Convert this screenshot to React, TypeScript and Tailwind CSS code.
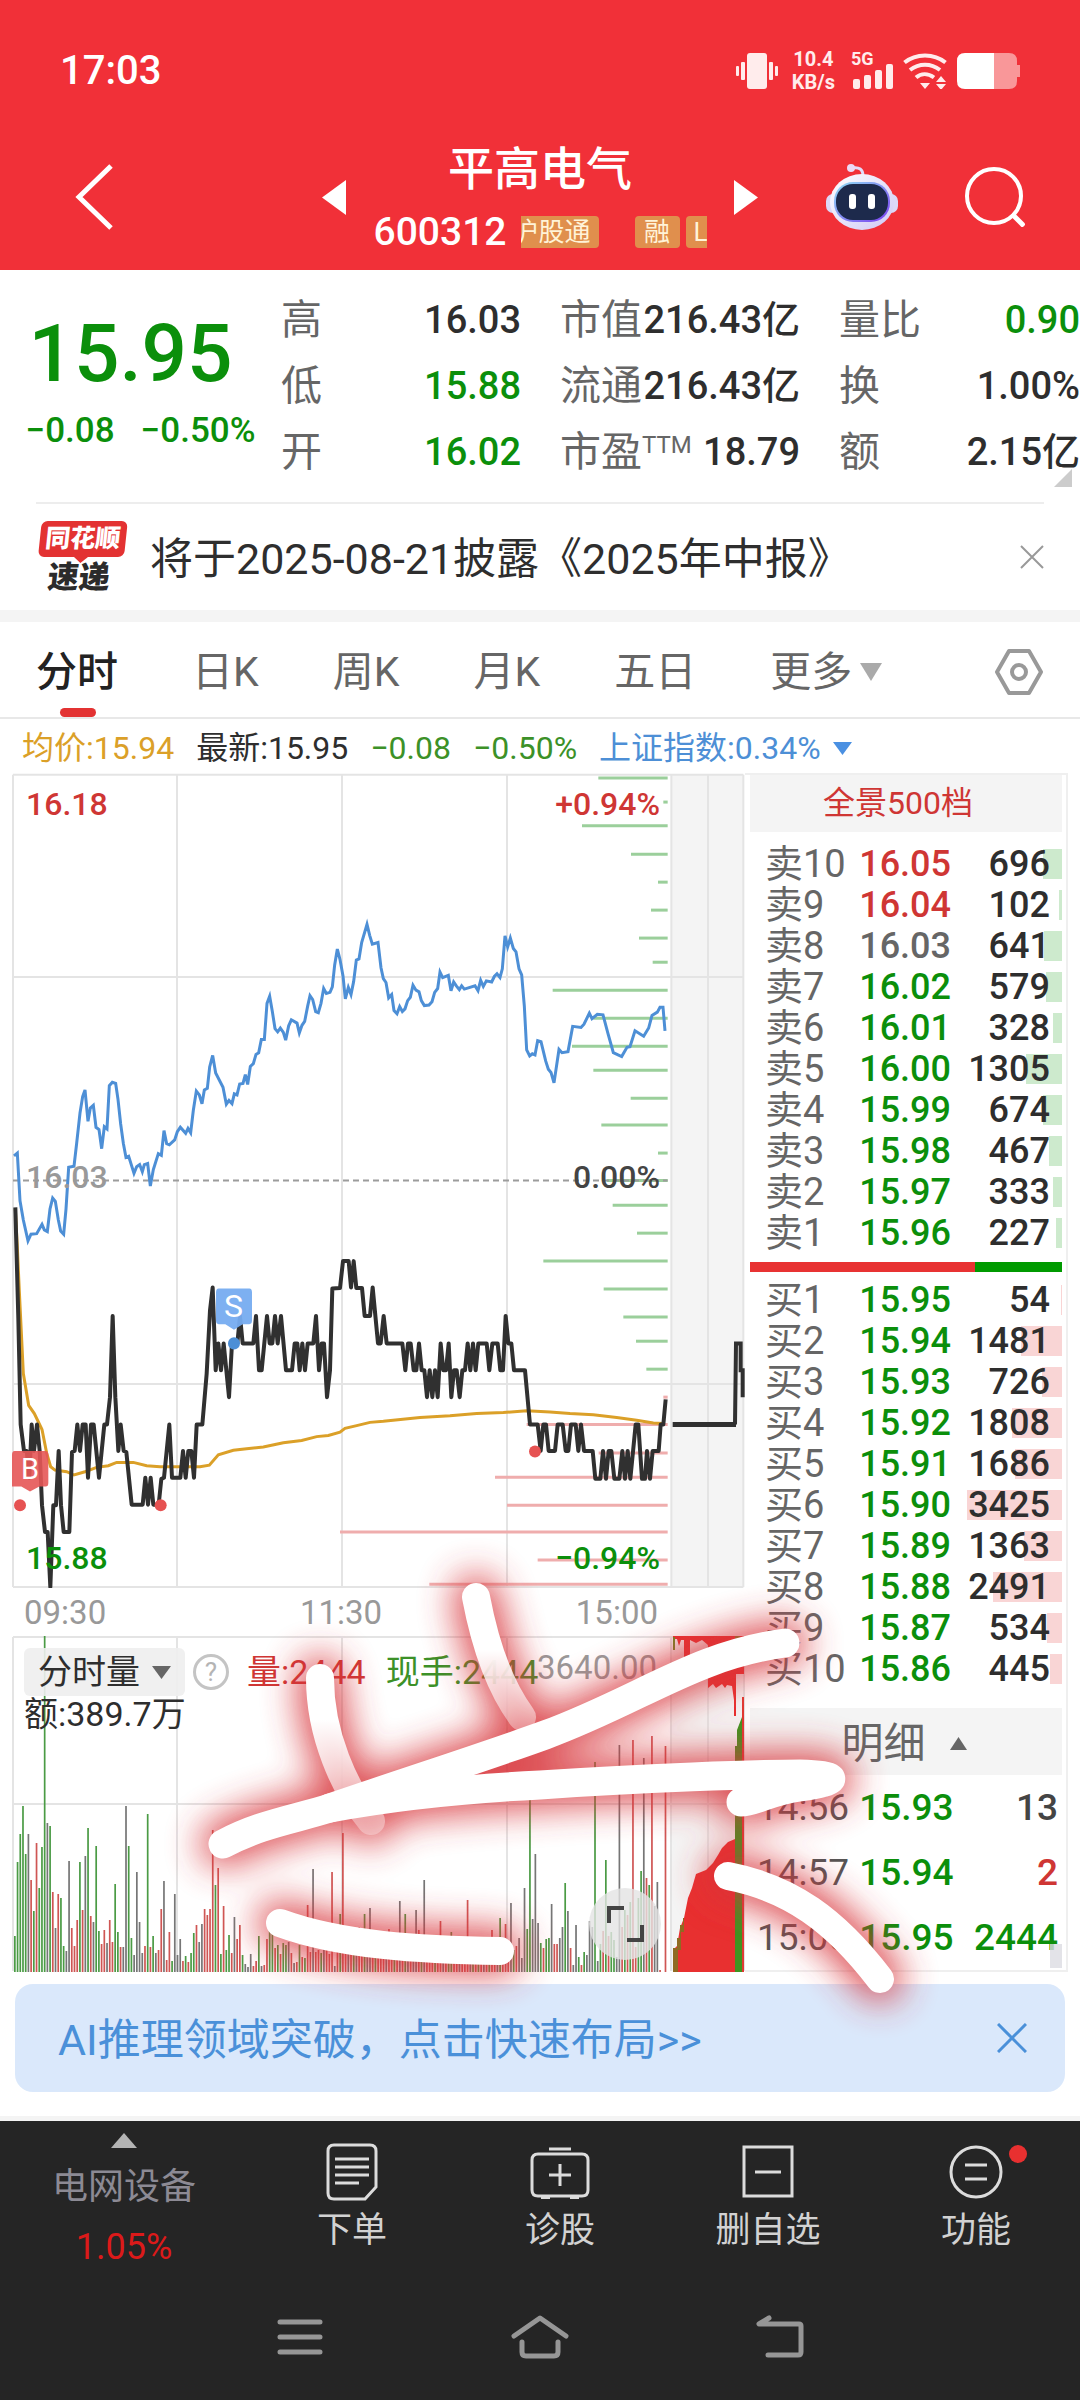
import React from "react";

const GREEN = "text-[#0b8f0b]";
const RED = "text-[#cf3634]";
const DARK = "text-[#2e2e2e]";

/* ---------- chart data ---------- */

const gridX = [39, 531, 1026, 1521, 2014, 2124, 2230];
const gridY = [8, 377, 1119, 1489];

const indexLine =
  "42,703 52,698 60,785 70,820 84,858 93,846 110,845 126,828 133,838 142,841 150,800 158,780 166,786 175,820 182,840 191,846 198,800 206,724 222,722 230,680 240,625 248,595 255,583 264,640 271,616 280,611 288,651 297,655 305,690 313,650 321,654 328,575 337,569 347,571 354,600 362,645 370,680 378,706 386,704 402,735 410,723 419,719 427,732 433,719 443,717 451,758 460,728 475,699 484,702 492,657 500,681 508,683 524,674 532,659 541,651 557,662 564,653 572,661 580,620 589,585 598,592 606,608 613,583 622,580 629,541 638,520 647,552 669,578 679,609 687,602 696,608 703,590 711,592 719,572 729,571 736,555 743,573 751,540 760,535 768,518 776,515 784,491 793,491 801,425 809,412 817,440 825,471 833,477 841,470 850,478 857,492 866,466 874,455 891,461 898,479 906,465 914,458 923,430 930,411 938,418 947,440 955,442 963,425 971,398 979,407 990,405 997,395 1004,355 1012,326 1020,345 1029,375 1036,417 1045,396 1053,409 1061,385 1069,346 1077,344 1085,314 1101,281 1109,301 1117,317 1134,314 1143,360 1150,380 1158,387 1166,415 1175,409 1182,438 1191,444 1199,431 1207,440 1215,435 1223,420 1231,414 1239,392 1248,401 1257,404 1264,420 1273,429 1287,428 1296,422 1304,405 1313,398 1320,368 1328,378 1345,374 1353,402 1361,386 1369,393 1378,400 1385,393 1393,399 1425,393 1434,402 1442,383 1450,394 1459,384 1475,386 1483,376 1491,371 1500,378 1507,362 1515,302 1523,322 1531,306 1540,325 1548,331 1557,362 1565,373 1573,430 1580,510 1589,521 1597,517 1605,519 1613,493 1623,495 1637,530 1645,545 1653,551 1662,570 1677,509 1686,515 1704,513 1718,467 1743,469 1752,463 1768,443 1776,453 1792,445 1809,446 1824,480 1840,515 1865,522 1881,505 1890,504 1905,475 1931,485 1946,470 1956,447 1972,441 1980,432 1989,432 1995,475";

const priceLine =
  "46,797 55,1000 62,1193 72,1241 80,1241 88,1290 95,1193 102,1241 111,1193 119,1241 126,1340 135,1389 143,1389 151,1489 160,1340 168,1340 176,1241 183,1340 191,1389 208,1389 216,1243 224,1241 232,1193 240,1241 248,1193 257,1193 264,1290 273,1193 281,1193 297,1290 313,1193 321,1193 330,1143 338,995 346,1143 355,1241 362,1193 371,1241 379,1243 395,1339 428,1339 436,1290 444,1339 452,1290 460,1339 476,1339 484,1292 492,1290 508,1193 516,1290 541,1290 549,1241 557,1290 565,1241 574,1241 582,1290 590,1193 607,1193 620,1100 630,985 638,943 647,1094 655,1045 663,1094 671,1045 687,1143 696,1045 712,1045 720,995 728,1045 760,1045 768,995 777,1094 785,1094 801,995 809,1045 817,1045 825,995 833,1045 843,995 858,1094 876,1094 884,1045 892,1045 899,1094 907,1045 915,1094 923,1045 940,1045 948,995 957,1094 965,1045 972,1045 981,1143 990,1094 997,945 1020,944 1029,895 1046,895 1053,943 1061,895 1069,944 1086,944 1094,995 1110,995 1118,943 1134,1045 1142,1045 1151,995 1160,1045 1207,1045 1216,1094 1224,1045 1232,1045 1241,1094 1249,1094 1257,1045 1265,1094 1273,1094 1281,1143 1289,1094 1297,1143 1305,1094 1313,1143 1322,1045 1330,1094 1338,1094 1346,1045 1354,1143 1362,1094 1370,1094 1379,1143 1387,1094 1395,1094 1403,1045 1411,1094 1419,1045 1427,1094 1435,1045 1460,1045 1468,1094 1477,1045 1493,1045 1501,1094 1509,1094 1517,995 1525,1045 1534,1045 1542,1094 1575,1094 1590,1193 1613,1193 1622,1241 1630,1193 1638,1193 1646,1241 1665,1241 1673,1193 1688,1193 1697,1241 1705,1241 1713,1193 1727,1193 1735,1241 1743,1193 1752,1241 1778,1241 1786,1292 1801,1292 1809,1241 1818,1292 1826,1241 1834,1241 1843,1292 1858,1292 1867,1241 1875,1292 1883,1241 1891,1292 1907,1193 1915,1193 1926,1292 1935,1292 1941,1241 1950,1292 1958,1241 1976,1241 1982,1193 1990,1193 1997,1147";

const averageLine =
  "46,800 52,870 58,950 70,1100 86,1158 103,1173 126,1202 140,1245 152,1270 165,1276 200,1279 222,1285 255,1279 290,1271 325,1268 350,1262 400,1262 440,1268 480,1270 600,1270 628,1267 655,1248 700,1240 740,1237 790,1234 850,1226 905,1222 950,1215 985,1213 1020,1207 1035,1200 1070,1195 1110,1189 1150,1187 1260,1180 1350,1177 1430,1173 1510,1171 1580,1168 1650,1170 1710,1173 1780,1175 1850,1180 1910,1185 1960,1190 1988,1191";

const sellLevels = [
  [1795, 14], [1990, 58], [1746, 101], [1893, 153], [1974, 204], [1953, 255], [1917, 306], [1958, 350],
  [1658, 401], [1780, 452], [1716, 503], [1780, 547], [1892, 598], [1804, 647], [1974, 698], [1820, 748],
  [1838, 793], [1911, 844], [1630, 895], [1811, 946], [1870, 997], [1908, 1041], [1939, 1092],
];
const buyLevels = [
  [1990, 1143], [1580, 1193], [1796, 1245], [1485, 1289], [1521, 1340], [1020, 1389], [1613, 1440], [1288, 1484],
];

/* one bar a minute: colour letter followed by the bar's height */
const volumes =
  "g36 g110 g138 g166 g118 k138 r92 g61 r129 g84 g125 g336 k149 g146 r80 k44 r78 g74 g26 k21 k111 r44 r26 r52 g110 r62 k116 g144 r56 k50 g126 g41 r28 r42 k29 r52 r30 g88 g40 r25 k25 k166 g126 g34 k17 k100 k50 k19 r26 g158 r25 g36 k19 r22 r63 k91 r12 r40 g11 k78 k17 k33 r11 g16 r10 g19 g39 r47 k30 k48 r63 r57 r63 r142 g87 r104 g18 r66 g22 g37 r19 k55 r33 r47 g17 k8 k5 k18 r6 r11 g36 k6 r7 r33 g42 g39 r24 g27 r18 g29 g27 k30 r19 k9 r10 g27 r15 g14 r67 r20 k103 r20 r22 g19 k26 r24 r18 r100 k6 r24 g58 r139 r29 k24 r31 g26 k22 r45 r30 g58 k24 k64 r28 g20 r26 r19 r33 k22 r43 r25 g26 r21 k71 r20 g58 k28 r30 k37 k62 r42 g23 k92 r20 r28 r18 g24 r22 r51 k20 r28 g22 g40 r26 r19 k28 r25 r22 r72 k20 g24 r30 g18 r26 k20 r28 g24 r42 r26 k34 g54 r30 r48 r26 k69 g22 r26 k34 k14 k84 g43 g179 k53 k118 k49 g29 r24 g33 g34 k68 r28 r28 k34 k45 g89 k61 r24 k7 k47 g15 r7 g20 k17 k51 k45 g210 k11 g28 r41 g112 r36 g40 g32 k15 k227 r45 g62 r57 g70 r232 r25 g74 g101 k214 r94 g87 r236 k66 k90 r2 r0 r226"
    .split(" ")
    .map((v) => ({ tone: v[0], size: Number(v.slice(1)) }));

const toneClass: Record<string, string> = {
  g: "fill-[#4b9b45]",
  r: "fill-[#cf5654]",
  k: "fill-[#767676]",
};

/* ---------- order book data ---------- */

type Level = { name: string; price: string; qty: number; tone: string };
const sells: Level[] = [
  { name: "卖10", price: "16.05", qty: 696, tone: RED },
  { name: "卖9", price: "16.04", qty: 102, tone: RED },
  { name: "卖8", price: "16.03", qty: 641, tone: "text-[#666]" },
  { name: "卖7", price: "16.02", qty: 579, tone: GREEN },
  { name: "卖6", price: "16.01", qty: 328, tone: GREEN },
  { name: "卖5", price: "16.00", qty: 1305, tone: GREEN },
  { name: "卖4", price: "15.99", qty: 674, tone: GREEN },
  { name: "卖3", price: "15.98", qty: 467, tone: GREEN },
  { name: "卖2", price: "15.97", qty: 333, tone: GREEN },
  { name: "卖1", price: "15.96", qty: 227, tone: GREEN },
];
const buys: Level[] = [
  { name: "买1", price: "15.95", qty: 54, tone: GREEN },
  { name: "买2", price: "15.94", qty: 1481, tone: GREEN },
  { name: "买3", price: "15.93", qty: 726, tone: GREEN },
  { name: "买4", price: "15.92", qty: 1808, tone: GREEN },
  { name: "买5", price: "15.91", qty: 1686, tone: GREEN },
  { name: "买6", price: "15.90", qty: 3425, tone: GREEN },
  { name: "买7", price: "15.89", qty: 1363, tone: GREEN },
  { name: "买8", price: "15.88", qty: 2491, tone: GREEN },
  { name: "买9", price: "15.87", qty: 534, tone: GREEN },
  { name: "买10", price: "15.86", qty: 445, tone: GREEN },
];
const trades = [
  { time: "14:56", price: "15.93", qty: "13", tone: "text-[#444]" },
  { time: "14:57", price: "15.94", qty: "2", tone: RED },
  { time: "15:00", price: "15.95", qty: "2444", tone: GREEN },
];

function BookTable({ rows, label, bar }: { rows: Level[]; label: string; bar: string }) {
  return (
    <table aria-label={label} className="w-full table-fixed border-collapse text-[36px] leading-[41px]">
      <tbody>
        {rows.map((r) => (
          <tr key={r.name} className="h-[41px]">
            <th scope="row" className="w-[35%] p-0 pl-[15px] text-left text-[38px] font-normal whitespace-nowrap text-[#666]">
              {r.name}
            </th>
            <td className={`w-[33%] p-0 font-medium ${r.tone}`}>{r.price}</td>
            <td className={`relative w-[32%] p-0 pr-3 text-right font-medium ${DARK}`}>
              <span
                className={`absolute top-[5px] right-0 h-[30px] ${bar}`}
                style={{ width: `${(r.qty / 3425) * 95}%` }}
              />
              <span className="relative">{r.qty}</span>
            </td>
          </tr>
        ))}
      </tbody>
    </table>
  );
}

/* ---------- header ---------- */

function StatusBar() {
  return (
    <div className="flex h-[134px] items-center px-[60px] pt-2">
      <span className="text-[40px] leading-[48px] font-medium">17:03</span>
      <svg className="ml-auto h-9 w-[42px] fill-[#ffecec]" viewBox="0 0 42 36" aria-label="振动">
        <rect x="11" y="0" width="20" height="36" rx="3" />
        <rect x="5" y="9" width="4" height="18" rx="1" />
        <rect x="0" y="13" width="3" height="10" rx="1" />
        <rect x="33" y="9" width="4" height="18" rx="1" />
        <rect x="39" y="13" width="3" height="10" rx="1" />
      </svg>
      <span className="ml-[14px] flex flex-col items-center text-[20px] leading-[23px] font-bold text-[#ffecec]">
        <span>10.4</span>
        <span>KB/s</span>
      </span>
      <span className="ml-4 flex h-10 flex-col">
        <span className="text-[18px] leading-[16px] font-bold text-[#ffecec]">5G</span>
        <svg className="-mt-1 ml-[2px] h-[26px] w-10 fill-[#ffecec]" viewBox="0 0 40 26">
          <rect x="0" y="16" width="7" height="10" rx="2" />
          <rect x="11" y="12" width="7" height="14" rx="2" />
          <rect x="22" y="7" width="7" height="19" rx="2" />
          <rect x="33" y="1" width="7" height="25" rx="2" />
        </svg>
      </span>
      <svg className="ml-[10px] h-9 w-11 fill-none stroke-[#ffecec]" viewBox="0 0 44 36" strokeWidth="4" aria-label="Wi-Fi">
        <path d="M1.500 9.500C13 0 31 0 42.500 9.500M7 17C16 10 28 10 37 17M13 24.500C18 20 25 20 31 24.500" />
        <path d="M17 30h10l-5 6zM33 29l5-6 5 6zM33 31h10l-5 6z" className="fill-[#ffecec]" stroke="none" />
      </svg>
      <svg className="ml-[10px] h-9 w-[63px]" viewBox="0 0 63 36" aria-label="电量">
        <path d="M37 0h15q8 0 8 8v4h3v12h-3v4q0 8-8 8H37z" className="fill-[#f99799]" />
        <path d="M37 0H8Q0 0 0 8v20q0 8 8 8h29z" className="fill-white" />
      </svg>
    </div>
  );
}

function Robot() {
  return (
    <svg className="h-[68px] w-[74px]" viewBox="0 0 74 68">
      <defs>
        <linearGradient id="shell" x1="0" y1="0" x2="1" y2="1">
          <stop offset="0" stopColor="#fff" />
          <stop offset="1" stopColor="#cfc8f5" />
        </linearGradient>
        <linearGradient id="rim" x1="0" y1="0" x2="1" y2="1">
          <stop offset="0" stopColor="#8fe0f5" />
          <stop offset="1" stopColor="#7a3cf0" />
        </linearGradient>
      </defs>
      <path d="M27 5q11-2 11 8" fill="none" stroke="#e2dcfa" strokeWidth="3" />
      <circle cx="26" cy="5" r="4" fill="#ecd9f6" />
      <rect x="1" y="31" width="72" height="19" rx="7" fill="#dcd8f8" />
      <ellipse cx="37" cy="39" rx="32" ry="28" fill="url(#shell)" />
      <rect x="9" y="19" width="56" height="40" rx="19" fill="url(#rim)" />
      <rect x="11" y="21" width="52" height="36" rx="17" fill="#1d2a4c" />
      <rect x="24" y="31" width="7" height="15" rx="3" fill="#fff" />
      <rect x="43" y="31" width="7" height="15" rx="3" fill="#fff" />
    </svg>
  );
}

function TitleBar() {
  return (
    <div className="grid grid-cols-[1fr_436px_1fr] items-center px-[55px] pb-[10px]">
      <button aria-label="返回" className="h-[66px] w-[66px] pl-5">
        <svg className="h-[66px] w-[38px] fill-none stroke-white stroke-[5]" viewBox="0 0 38 66">
          <path d="M36 2L4 33l32 31" />
        </svg>
      </button>
      <div className="flex items-center justify-between">
        <button aria-label="上一只">
          <svg className="h-[35px] w-6 fill-white" viewBox="0 0 24 35"><path d="M24 0v35L0 17.500z" /></svg>
        </button>
        <div className="flex flex-col items-center">
          <h1 className="text-[46px] leading-[70px] font-medium">平高电气</h1>
          <div className="flex items-center gap-[14px]">
            <span className="text-[39px] leading-[56px] font-medium">600312</span>
            <div className="flex h-8 w-[186px] overflow-hidden text-[26px] leading-8 whitespace-nowrap text-[#fff3d8]">
              <span className="flex w-[78px] shrink-0 justify-end overflow-hidden rounded-r-sm bg-[#e08f4d] pr-2">沪股通</span>
              <span className="ml-9 w-[45px] shrink-0 rounded-sm bg-[#e08f4d] text-center">融</span>
              <span className="ml-[6px] shrink-0 rounded-sm bg-[#e08f4d] px-2">L1</span>
            </div>
          </div>
        </div>
        <button aria-label="下一只">
          <svg className="h-[35px] w-6 fill-white" viewBox="0 0 24 35"><path d="M0 0v35L24 17.500z" /></svg>
        </button>
      </div>
      <div className="flex items-center justify-end gap-[66px]">
        <button aria-label="智能助手"><Robot /></button>
        <button aria-label="搜索">
          <svg className="h-[60px] w-[60px] fill-none stroke-white stroke-[4]" viewBox="0 0 60 60">
            <circle cx="29" cy="29" r="27" />
            <path d="M47 47l12 12" strokeWidth="5" />
          </svg>
        </button>
      </div>
    </div>
  );
}

/* ---------- quote summary ---------- */

function Quote({ name, sup, value, tone }: { name: string; sup?: string; value: string; tone: string }) {
  return (
    <div className="flex h-[66px] items-center justify-between leading-[48px] whitespace-nowrap">
      <dt className="flex text-[41px] text-[#666]">
        {name}
        {sup && <sup className="top-0 text-[24px] leading-[34px]">{sup}</sup>}
      </dt>
      <dd className={`text-[38px] font-medium ${tone}`}>{value}</dd>
    </div>
  );
}

function Summary() {
  return (
    <section className="relative grid h-[232px] grid-cols-[281fr_240fr_39fr_240fr_39fr_241fr]">
      <div className={`flex flex-col items-center pt-8 font-medium ${GREEN}`}>
        <strong className="mr-5 text-[80px] leading-[104px] font-medium">15.95</strong>
        <div className="flex gap-[26px] text-[35px] leading-[50px] whitespace-nowrap">
          <span>−0.08</span>
          <span>−0.50%</span>
        </div>
      </div>
      <dl className="pt-[17px]">
        <Quote name="高" value="16.03" tone={DARK} />
        <Quote name="低" value="15.88" tone={GREEN} />
        <Quote name="开" value="16.02" tone={GREEN} />
      </dl>
      <dl className="col-start-4 pt-[17px]">
        <Quote name="市值" value="216.43亿" tone={DARK} />
        <Quote name="流通" value="216.43亿" tone={DARK} />
        <Quote name="市盈" sup="TTM" value="18.79" tone={DARK} />
      </dl>
      <dl className="col-start-6 pt-[17px]">
        <Quote name="量比" value="0.90" tone={GREEN} />
        <Quote name="换" value="1.00%" tone={DARK} />
        <Quote name="额" value="2.15亿" tone={DARK} />
      </dl>
      <svg className="absolute right-2 bottom-[15px] h-[18px] w-[18px] fill-[#ccc]" viewBox="0 0 18 18"><path d="M18 0v18H0z" /></svg>
    </section>
  );
}

function News() {
  return (
    <section className="mx-9 flex h-[108px] items-center border-t-2 border-[#ededed]">
      <div className="flex w-[90px] -skew-x-6 flex-col items-center font-black">
        <span className="w-[86px] rounded-md bg-[#e33232] text-center text-[25px] leading-9 text-white">同花顺</span>
        <svg className="h-[6px] w-[14px] fill-[#e33232]" viewBox="0 0 14 6"><path d="M0 0h14L7 6z" /></svg>
        <span className="text-[31px] leading-[30px] text-[#2b2b2b]">速递</span>
      </div>
      <p className="ml-6 pt-1 text-[43px] leading-[52px] whitespace-nowrap text-[#2e2e2e]">将于2025-08-21披露《2025年中报》</p>
      <button aria-label="关闭" className="ml-auto">
        <svg className="h-6 w-6 stroke-[#999] stroke-2" viewBox="0 0 24 24"><path d="M1 1l22 22M23 1L1 23" /></svg>
      </button>
    </section>
  );
}

/* ---------- charts ---------- */

function Down({ className }: { className: string }) {
  return <svg className={className} viewBox="0 0 20 18" preserveAspectRatio="none"><path d="M0 0h20L10 18z" /></svg>;
}

function PriceChart() {
  return (
    <div className="relative">
      <svg
        className="block h-[815px] w-full fill-none [&_*]:[vector-effect:non-scaling-stroke]"
        viewBox="36 5 2199 1486"
        preserveAspectRatio="none"
        aria-label="分时走势"
      >
        <rect x="2014" y="8" width="216" height="1481" className="fill-[#f4f4f4]" />
        <g className="stroke-[#e4e4e4] stroke-2">
          {gridX.map((x) => <path key={x} d={`M${x} 8V1489`} />)}
          {gridY.map((y) => <path key={y} d={`M39 ${y}H2230`} />)}
        </g>
        <g className="stroke-[#9bcf9b] stroke-3">
          {sellLevels.map(([x, y]) => <path key={y} d={`M${x} ${y}H2003`} />)}
        </g>
        <g className="stroke-[#efadad] stroke-3">
          {buyLevels.map(([x, y]) => <path key={y} d={`M${x} ${y}H2003`} />)}
        </g>
        <path d="M39 748H2003" className="stroke-[#9c9c9c] stroke-2" strokeDasharray="6 4" />
        <polyline points={indexLine} className="stroke-[#4d8fd6] stroke-3" />
        <polyline points={averageLine} className="stroke-[#dba028] stroke-3" />
        <polyline points={priceLine} className="stroke-[#303030] stroke-4" strokeLinejoin="round" />
        <path d="M2018 1193H2208" className="stroke-[#303030] stroke-5" />
        <path d="M2205 1193L2208 1045H2222V1094H2228V1143" className="stroke-[#303030] stroke-4" />
        <g className="fill-[#e65252]">
          <ellipse cx="60" cy="1340" rx="18" ry="11" />
          <ellipse cx="482" cy="1340" rx="18" ry="11" />
          <ellipse cx="1605" cy="1242" rx="18" ry="11" />
        </g>
        <ellipse cx="702" cy="1045" rx="18" ry="11" className="fill-[#4d8fd6]" />
        <path d="M44 1241H137Q145 1241 145 1248V1299Q145 1306 137 1306H118L90 1315L64 1306H36V1248Q36 1241 44 1241" className="fill-[#e65656]/90" />
        <path d="M656 945H748Q756 945 756 952V1003Q756 1010 748 1010H728L702 1020L676 1010H656Q648 1010 648 1003V952Q648 945 656 945" className="fill-[#76acf0]/95" />
      </svg>
      <div className="absolute inset-0 text-[32px] leading-[40px] font-medium">
        <span className={`absolute top-[11px] left-[14px] ${RED}`}>16.18</span>
        <span className={`absolute top-[11px] right-[85px] ${RED}`}>+0.94%</span>
        <span className="absolute top-[384px] left-[14px] text-[#999]">16.03</span>
        <span className="absolute top-[384px] right-[85px] text-[#444]">0.00%</span>
        <span className={`absolute top-[765px] left-[14px] ${GREEN}`}>15.88</span>
        <span className={`absolute top-[765px] right-[85px] ${GREEN}`}>−0.94%</span>
        <span className="absolute top-[678px] left-[9px] text-[29px] leading-9 font-normal text-white">B</span>
        <span className="absolute top-[515px] left-[212px] text-[32px] leading-9 font-normal text-white">S</span>
      </div>
    </div>
  );
}

function VolumeChart() {
  return (
    <div className="relative">
      <svg className="block h-[336px] w-full" viewBox="12 1636 733 336" preserveAspectRatio="none" aria-label="分时量">
        <rect x="671" y="1637" width="73" height="334" className="fill-[#f4f4f4]" />
        <g className="fill-none stroke-[#e4e4e4] stroke-2">
          {[13, 177, 342, 507, 671, 708, 744].map((x) => <path key={x} d={`M${x} 1637V1971`} />)}
          {[1637, 1804].map((y) => <path key={y} d={`M13 ${y}H744`} />)}
        </g>
        {volumes.map((v, i) => (
          <rect key={i} x={14 + i * 2.711} y={1972 - v.size} width="1.7" height={v.size} className={toneClass[v.tone]} />
        ))}
        <path
          d="M673 1972V1950L677 1946L680 1928L684 1918L688 1898L692 1888L696 1874L706 1870L713 1863L718 1855L722 1848L728 1842L735 1839V1972z"
          className="fill-[#e83030]"
        />
        <path d="M673 1972V1948H677V1938H680V1925H683V1918H684V1932H681V1950H678V1972z" className="fill-[#8f6a22]" />
        <path d="M735 1972V1746H737V1730L742 1717V1972z" className="fill-[#3f9420]" />
        <path d="M742 1972V1697H744V1972z" className="fill-[#e03a34]" />
        <path
          d="M673 1636H744V1674H736V1716H734V1700L732 1686L727 1685L725 1688L722 1684L716 1688L713 1684L708 1688V1645L702 1640L696 1643L690 1640V1658H684V1640H681L679 1646L677 1639H673z"
          className="fill-[#e83030]"
        />
        <path d="M673 1637h2v13h-2zM735 1636h5v5h-5z" className="fill-[#6a8a22]" />
      </svg>
      <div className="absolute inset-x-0 top-3 pl-3">
        <div className="flex items-center text-[34px] leading-12 whitespace-nowrap">
          <button className={`flex h-12 items-center gap-3 rounded-md bg-[#eee]/90 px-[14px] ${DARK}`}>
            分时量
            <Down className="h-[13px] w-[19px] fill-[#666]" />
          </button>
          <button aria-label="说明" className="ml-2 h-9 w-9 rounded-full border-[3px] border-[#c4c4c4] text-[26px] leading-[30px] text-[#b4b4b4]">
            ?
          </button>
          <span className={`ml-[18px] ${RED}`}>量:2444</span>
          <span className="ml-5 text-[#3c9128]">现手:2444</span>
        </div>
        <p className={`text-[34px] leading-[36px] ${DARK}`}>额:389.7万</p>
      </div>
      <span className="absolute top-[10px] right-[88px] text-[33px] leading-[44px] text-[#999]">3640.00</span>
      <button aria-label="全屏" className="absolute right-[84px] bottom-3 h-[72px] w-[72px] rounded-full bg-[#e4e4e4]/80">
        <svg className="h-[72px] w-[72px] fill-none stroke-[#444] stroke-[4]" viewBox="0 0 72 72">
          <path d="M20 35V20h15M38 52h15V37" />
        </svg>
      </button>
    </div>
  );
}

/* free-hand brush strokes with a red glow over the charts */
const brush = [
  { d: "M320 1678C320 1735 345 1790 371 1821", w: 28, c: "url(#fadeA)" },
  { d: "M476 1597C486 1650 502 1690 522 1717", w: 28, c: "url(#fadeB)" },
  { d: "M223 1844C260 1824 295 1819 330 1808C415 1779 490 1755 545 1735C640 1700 695 1655 785 1643", w: 29, c: "#fff" },
  { d: "M330 1808C400 1795 480 1788 540 1785C640 1778 760 1774 800 1774C840 1775 842 1781 800 1787C770 1791 755 1802 741 1802", w: 29, c: "#fff" },
  { d: "M280 1923C340 1945 420 1950 500 1951", w: 28, c: "#fff" },
  { d: "M728 1876C790 1888 835 1920 880 1979", w: 28, c: "#fff" },
];

function Scribble() {
  return (
    <svg
      className="pointer-events-none absolute inset-0 h-full w-full overflow-visible fill-none"
      viewBox="0 773 1080 1199"
      preserveAspectRatio="none"
      aria-hidden="true"
    >
      <defs>
        <filter id="glow" filterUnits="userSpaceOnUse" x="100" y="1450" width="900" height="650">
          <feGaussianBlur stdDeviation="18" />
        </filter>
        <linearGradient id="fadeA" gradientUnits="userSpaceOnUse" x1="0" y1="1720" x2="0" y2="1835">
          <stop offset="0" stopColor="#fff" />
          <stop offset="1" stopColor="#fff" stopOpacity="0.3" />
        </linearGradient>
        <linearGradient id="fadeB" gradientUnits="userSpaceOnUse" x1="0" y1="1650" x2="0" y2="1735">
          <stop offset="0" stopColor="#fff" />
          <stop offset="1" stopColor="#fff" stopOpacity="0.3" />
        </linearGradient>
      </defs>
      <g filter="url(#glow)" strokeLinecap="round" strokeLinejoin="round" className="stroke-[#d8343a]" opacity="0.88">
        {brush.map((b) => <path key={b.d} d={b.d} strokeWidth="45" />)}
      </g>
      <g strokeLinecap="round" strokeLinejoin="round">
        {brush.map((b) => <path key={b.d} d={b.d} stroke={b.c} strokeWidth={b.w} />)}
      </g>
    </svg>
  );
}

/* ---------- bottom bar ---------- */

function Action({ label, children }: { label: string; children: React.ReactNode }) {
  return (
    <button className="relative flex flex-1 flex-col items-center pt-[23px] text-[35px] leading-[50px] text-[#d2d2d2]">
      <svg className="mb-[6px] h-14 w-[58px] overflow-visible fill-none stroke-[#dcdcdc] stroke-3" viewBox="0 0 58 56">
        {children}
      </svg>
      {label}
    </button>
  );
}

export default function App() {
  return (
    <main className='min-h-screen overflow-hidden bg-white font-[Roboto,"Noto_Sans_CJK_SC",sans-serif]'>
      <header className="bg-[#f13038] text-white">
        <StatusBar />
        <TitleBar />
      </header>
      <Summary />
      <News />
      <div className="h-3 bg-[#f4f4f4]" />

      <nav className="flex h-[97px] items-center gap-[74px] border-b-2 border-[#e8e8e8] pt-1 pr-[37px] pl-9 text-[41px] leading-[60px] whitespace-nowrap text-[#666]">
        <button className="relative flex h-full items-center font-medium text-[#222]">
          分时
          <span className="absolute bottom-0 left-6 h-[9px] w-9 rounded-full bg-[#e33232]" />
        </button>
        <button>日K</button>
        <button>周K</button>
        <button>月K</button>
        <button>五日</button>
        <button className="flex items-center gap-2">
          更多
          <Down className="h-[18px] w-[22px] fill-[#aaa]" />
        </button>
        <button aria-label="设置" className="ml-auto">
          <svg className="h-[46px] w-[48px] fill-none stroke-[#999] stroke-[4]" viewBox="0 0 48 46" strokeLinejoin="round">
            <path d="M14 2h20l12 21-12 21H14L2 23z" />
            <circle cx="24" cy="23" r="7" />
          </svg>
        </button>
      </nav>

      <div className="flex h-[54px] items-center gap-[22px] pt-1 pl-[22px] text-[32px] leading-[44px] whitespace-nowrap">
        <span className="text-[#dba028]">均价:15.94</span>
        <span className={DARK}>最新:15.95</span>
        <span className="text-[#3c9128]">−0.08</span>
        <span className="text-[#3c9128]">−0.50%</span>
        <button className="flex items-center gap-3 text-[#4d8fd6]">
          上证指数:0.34%
          <Down className="h-[13px] w-[19px] fill-[#4a90e2]" />
        </button>
      </div>

      <section className="relative grid grid-cols-[733fr_323fr] px-3">
        <div>
          <PriceChart />
          <div className="grid h-12 grid-cols-3 items-center pt-[2px] pr-[87px] pl-3 text-[33px] leading-[46px] text-[#999]">
            <span>09:30</span>
            <span className="text-center">11:30</span>
            <span className="text-right">15:00</span>
          </div>
          <VolumeChart />
        </div>

        <aside className="border-2 border-l-0 border-[#efefef] pr-1 pl-[5px]">
          <button className={`block h-[57px] w-full bg-[#f4f4f4] pr-4 text-[32px] leading-[57px] ${RED}`}>全景500档</button>
          <div className="pt-3">
            <BookTable rows={sells} label="卖盘" bar="bg-[#cdeacd]" />
          </div>
          <div className="my-2 flex h-[10px] bg-[#009a00]">
            <div className="w-[72%] bg-[#e83232]" />
          </div>
          <BookTable rows={buys} label="买盘" bar="bg-[#f9d5d5]" />
          <button className="mt-[18px] flex h-[67px] w-full items-center justify-center gap-6 bg-[#f4f4f4] pt-1 pr-1 text-[42px] leading-[60px] text-[#666]">
            明细
            <svg className="h-[13px] w-[17px] fill-[#666]" viewBox="0 0 17 13"><path d="M8.500 0L17 13H0z" /></svg>
          </button>
          <div className="relative">
            <table aria-label="成交明细" className="w-full table-fixed border-collapse text-[37px] leading-[60px]">
              <tbody>
                {trades.map((t) => (
                  <tr key={t.time} className="h-[65px]">
                    <td className="w-[35%] p-0 pl-[7px] text-[#555]">{t.time}</td>
                    <td className={`w-[32%] p-0 font-medium ${GREEN}`}>{t.price}</td>
                    <td className={`w-[33%] p-0 pr-1 text-right font-medium ${t.tone}`}>{t.qty}</td>
                  </tr>
                ))}
              </tbody>
            </table>
            <span className="absolute right-0 bottom-[2px] h-6 w-3 bg-[#dcdce2]/80" />
          </div>
        </aside>
        <Scribble />
      </section>

      <div className="mx-[15px] mt-3 flex h-[108px] items-center justify-between rounded-[18px] bg-[#dae8fb] pr-[38px] pl-[43px] text-[#4a90d9]">
        <a href="#ai" className="pt-1 text-[43px] leading-[60px] whitespace-nowrap">AI推理领域突破，点击快速布局&gt;&gt;</a>
        <button aria-label="关闭">
          <svg className="h-[30px] w-[30px] stroke-[#4a90d9] stroke-3" viewBox="0 0 30 30"><path d="M1 1l28 28M29 1L1 29" /></svg>
        </button>
      </div>
      <div className="mt-6 h-[5px] bg-[#f4f4f4]" />

      <footer className="min-h-[279px] bg-[#252525]">
        <div className="flex h-[154px]">
          <button className="flex w-[248px] flex-col items-center pt-3 text-[36px] text-[#8c8a94]">
            <svg className="h-[15px] w-[26px] fill-[#b4b4b4]" viewBox="0 0 26 15"><path d="M13 0l13 15H0z" /></svg>
            <span className="mt-[14px] leading-[50px]">电网设备</span>
            <span className="mt-[10px] leading-[50px] text-[#dc1a1a]">1.05%</span>
          </button>
          <Action label="下单">
            <path d="M11 1h36q6 0 6 6v36L42 55H11q-6 0-6-6V7q0-6 6-6zM12 15h34M12 23h34M12 31h34M12 39h24" />
          </Action>
          <Action label="诊股">
            <path d="M18 5h22M7 10h44q6 0 6 6v30q0 6-6 6H7q-6 0-6-6V16q0-6 6-6zM29 20v22M18 31h22M10 53.500h9M39 53.500h9" />
          </Action>
          <Action label="删自选">
            <path d="M5 3h48v49H5zM16 28h26" />
          </Action>
          <Action label="功能">
            <circle cx="29" cy="28" r="25" />
            <path d="M18 21h22M18 35h22" />
            <circle cx="71" cy="10" r="9" className="fill-[#e83030]" stroke="none" />
          </Action>
        </div>
        <div className="mx-auto flex h-[124px] w-[530px] items-center justify-between">
          <button aria-label="菜单">
            <svg className="h-11 w-[50px] stroke-[#969696] stroke-[5]" viewBox="0 0 50 44" strokeLinecap="round">
              <path d="M5 7h40M5 22h40M5 37h40" />
            </svg>
          </button>
          <button aria-label="主页">
            <svg className="h-11 w-[58px] fill-none stroke-[#969696] stroke-[5]" viewBox="0 0 58 44" strokeLinecap="round" strokeLinejoin="round">
              <path d="M3 21L29 3l26 18M11 27v10q0 4 4 4h28q4 0 4-4V27" />
            </svg>
          </button>
          <button aria-label="后退">
            <svg className="h-11 w-[50px] fill-none stroke-[#969696] stroke-[5]" viewBox="0 0 50 44" strokeLinecap="round" strokeLinejoin="round">
              <path d="M14 3L4 9h40q2 0 2 2v26q0 3-3 3H13" />
            </svg>
          </button>
        </div>
      </footer>
    </main>
  );
}
